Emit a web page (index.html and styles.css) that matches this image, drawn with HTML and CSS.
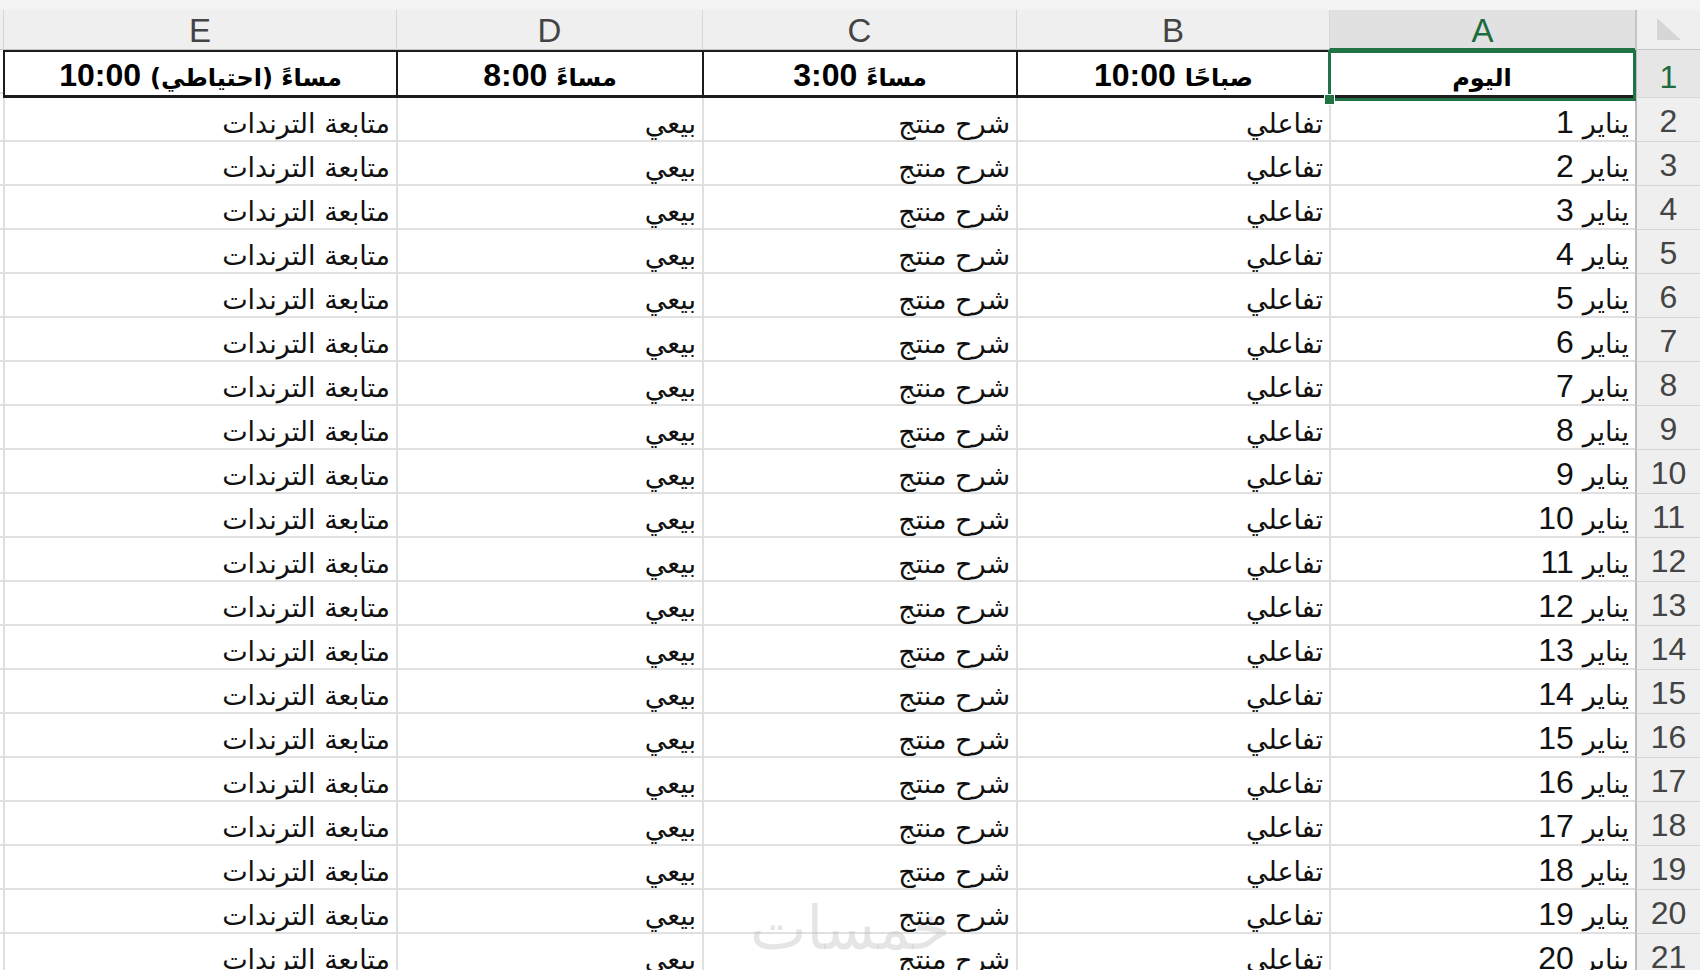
FILE: index.html
```html
<!DOCTYPE html>
<html lang="ar">
<head>
<meta charset="utf-8">
<title>جدول النشر</title>
<link rel="stylesheet" href="styles.css">
</head>
<body>
<div class="app">
  <div class="strip"></div>
  <div class="sheet" dir="rtl">
    <div class="corner"><svg width="26" height="22" viewBox="0 0 26 22"><polygon points="0,0 0,22 24,22" fill="#d6d6d6"/></svg></div>
    <div class="colh sel">A</div>
    <div class="colh">B</div>
    <div class="colh">C</div>
    <div class="colh">D</div>
    <div class="colh">E</div>
    <div class="colh edge"></div>

    <div class="rowh selr">1</div>
    <div class="hd active"><span class="arb">اليوم</span><div class="selbox"><i class="handle"></i></div></div>
    <div class="hd"><span class="arb">صباحًا</span> 10:00</div>
    <div class="hd"><span class="arb">مساءً</span> 3:00</div>
    <div class="hd"><span class="arb">مساءً</span> 8:00</div>
    <div class="hd"><span class="arb">مساءً (احتياطي)</span> 10:00</div>
    <div class="cell edge"></div>

    <div class="rowh">2</div><div class="cell"><span class="ar">يناير</span> 1</div><div class="cell"><span class="ar">تفاعلي</span></div><div class="cell"><span class="ar">شرح منتج</span></div><div class="cell"><span class="ar">بيعي</span></div><div class="cell"><span class="ar">متابعة الترندات</span></div><div class="cell edge"></div>
    <div class="rowh">3</div><div class="cell"><span class="ar">يناير</span> 2</div><div class="cell"><span class="ar">تفاعلي</span></div><div class="cell"><span class="ar">شرح منتج</span></div><div class="cell"><span class="ar">بيعي</span></div><div class="cell"><span class="ar">متابعة الترندات</span></div><div class="cell edge"></div>
    <div class="rowh">4</div><div class="cell"><span class="ar">يناير</span> 3</div><div class="cell"><span class="ar">تفاعلي</span></div><div class="cell"><span class="ar">شرح منتج</span></div><div class="cell"><span class="ar">بيعي</span></div><div class="cell"><span class="ar">متابعة الترندات</span></div><div class="cell edge"></div>
    <div class="rowh">5</div><div class="cell"><span class="ar">يناير</span> 4</div><div class="cell"><span class="ar">تفاعلي</span></div><div class="cell"><span class="ar">شرح منتج</span></div><div class="cell"><span class="ar">بيعي</span></div><div class="cell"><span class="ar">متابعة الترندات</span></div><div class="cell edge"></div>
    <div class="rowh">6</div><div class="cell"><span class="ar">يناير</span> 5</div><div class="cell"><span class="ar">تفاعلي</span></div><div class="cell"><span class="ar">شرح منتج</span></div><div class="cell"><span class="ar">بيعي</span></div><div class="cell"><span class="ar">متابعة الترندات</span></div><div class="cell edge"></div>
    <div class="rowh">7</div><div class="cell"><span class="ar">يناير</span> 6</div><div class="cell"><span class="ar">تفاعلي</span></div><div class="cell"><span class="ar">شرح منتج</span></div><div class="cell"><span class="ar">بيعي</span></div><div class="cell"><span class="ar">متابعة الترندات</span></div><div class="cell edge"></div>
    <div class="rowh">8</div><div class="cell"><span class="ar">يناير</span> 7</div><div class="cell"><span class="ar">تفاعلي</span></div><div class="cell"><span class="ar">شرح منتج</span></div><div class="cell"><span class="ar">بيعي</span></div><div class="cell"><span class="ar">متابعة الترندات</span></div><div class="cell edge"></div>
    <div class="rowh">9</div><div class="cell"><span class="ar">يناير</span> 8</div><div class="cell"><span class="ar">تفاعلي</span></div><div class="cell"><span class="ar">شرح منتج</span></div><div class="cell"><span class="ar">بيعي</span></div><div class="cell"><span class="ar">متابعة الترندات</span></div><div class="cell edge"></div>
    <div class="rowh">10</div><div class="cell"><span class="ar">يناير</span> 9</div><div class="cell"><span class="ar">تفاعلي</span></div><div class="cell"><span class="ar">شرح منتج</span></div><div class="cell"><span class="ar">بيعي</span></div><div class="cell"><span class="ar">متابعة الترندات</span></div><div class="cell edge"></div>
    <div class="rowh">11</div><div class="cell"><span class="ar">يناير</span> 10</div><div class="cell"><span class="ar">تفاعلي</span></div><div class="cell"><span class="ar">شرح منتج</span></div><div class="cell"><span class="ar">بيعي</span></div><div class="cell"><span class="ar">متابعة الترندات</span></div><div class="cell edge"></div>
    <div class="rowh">12</div><div class="cell"><span class="ar">يناير</span> 11</div><div class="cell"><span class="ar">تفاعلي</span></div><div class="cell"><span class="ar">شرح منتج</span></div><div class="cell"><span class="ar">بيعي</span></div><div class="cell"><span class="ar">متابعة الترندات</span></div><div class="cell edge"></div>
    <div class="rowh">13</div><div class="cell"><span class="ar">يناير</span> 12</div><div class="cell"><span class="ar">تفاعلي</span></div><div class="cell"><span class="ar">شرح منتج</span></div><div class="cell"><span class="ar">بيعي</span></div><div class="cell"><span class="ar">متابعة الترندات</span></div><div class="cell edge"></div>
    <div class="rowh">14</div><div class="cell"><span class="ar">يناير</span> 13</div><div class="cell"><span class="ar">تفاعلي</span></div><div class="cell"><span class="ar">شرح منتج</span></div><div class="cell"><span class="ar">بيعي</span></div><div class="cell"><span class="ar">متابعة الترندات</span></div><div class="cell edge"></div>
    <div class="rowh">15</div><div class="cell"><span class="ar">يناير</span> 14</div><div class="cell"><span class="ar">تفاعلي</span></div><div class="cell"><span class="ar">شرح منتج</span></div><div class="cell"><span class="ar">بيعي</span></div><div class="cell"><span class="ar">متابعة الترندات</span></div><div class="cell edge"></div>
    <div class="rowh">16</div><div class="cell"><span class="ar">يناير</span> 15</div><div class="cell"><span class="ar">تفاعلي</span></div><div class="cell"><span class="ar">شرح منتج</span></div><div class="cell"><span class="ar">بيعي</span></div><div class="cell"><span class="ar">متابعة الترندات</span></div><div class="cell edge"></div>
    <div class="rowh">17</div><div class="cell"><span class="ar">يناير</span> 16</div><div class="cell"><span class="ar">تفاعلي</span></div><div class="cell"><span class="ar">شرح منتج</span></div><div class="cell"><span class="ar">بيعي</span></div><div class="cell"><span class="ar">متابعة الترندات</span></div><div class="cell edge"></div>
    <div class="rowh">18</div><div class="cell"><span class="ar">يناير</span> 17</div><div class="cell"><span class="ar">تفاعلي</span></div><div class="cell"><span class="ar">شرح منتج</span></div><div class="cell"><span class="ar">بيعي</span></div><div class="cell"><span class="ar">متابعة الترندات</span></div><div class="cell edge"></div>
    <div class="rowh">19</div><div class="cell"><span class="ar">يناير</span> 18</div><div class="cell"><span class="ar">تفاعلي</span></div><div class="cell"><span class="ar">شرح منتج</span></div><div class="cell"><span class="ar">بيعي</span></div><div class="cell"><span class="ar">متابعة الترندات</span></div><div class="cell edge"></div>
    <div class="rowh">20</div><div class="cell"><span class="ar">يناير</span> 19</div><div class="cell"><span class="ar">تفاعلي</span></div><div class="cell"><span class="ar">شرح منتج</span></div><div class="cell"><span class="ar">بيعي</span></div><div class="cell"><span class="ar">متابعة الترندات</span></div><div class="cell edge"></div>
    <div class="rowh">21</div><div class="cell"><span class="ar">يناير</span> 20</div><div class="cell"><span class="ar">تفاعلي</span></div><div class="cell"><span class="ar">شرح منتج</span></div><div class="cell"><span class="ar">بيعي</span></div><div class="cell"><span class="ar">متابعة الترندات</span></div><div class="cell edge"></div>
  </div>
  <div class="watermark">خمسات</div>
</div>
</body>
</html>
```

FILE: styles.css
```css
html, body {
  margin: 0;
  padding: 0;
  background: #ffffff;
  overflow: hidden;
}
.app {
  position: relative;
  width: 1700px;
  height: 970px;
  overflow: hidden;
  font-family: "Liberation Sans", "DejaVu Sans", sans-serif;
}
.strip {
  height: 10px;
  background: #f3f3f3;
}
.sheet {
  display: grid;
  direction: rtl;
  grid-template-columns: 65px 306px 313px 314px 306px 393px 3px;
  grid-template-rows: 40px 48px repeat(20, 44px);
}
.corner {
  background: #efefef;
  border-bottom: 1px solid #c6c6c6;
  border-left: 2px solid #c6c6c6;
  box-sizing: border-box;
  display: flex;
  align-items: flex-end;
  justify-content: flex-end;
  padding: 0 0 9px 20px;
}
.corner svg { display: block; }
.colh {
  background: #efefef;
  box-sizing: border-box;
  border-left: 1px solid #d6d6d6;
  border-bottom: 1px solid #c6c6c6;
  color: #444444;
  font-size: 33px;
  line-height: 38px;
  text-align: center;
  padding-top: 2px;
}
.colh.sel {
  background: #e1e1e1;
  color: #1e6b40;
  border-bottom: 2px solid #217346;
}
.colh.edge { border-left: 0; }
.rowh {
  background: #efefef;
  box-sizing: border-box;
  border-bottom: 1px solid #d6d6d6;
  border-left: 2px solid #bcbcbc;
  color: #444444;
  font-size: 32px;
  line-height: 36px;
  display: flex;
  align-items: flex-end;
  justify-content: center;
  padding-bottom: 2px;
}
.rowh.selr {
  background: #e6e6e6;
  color: #1e6b40;
}
.cell {
  box-sizing: border-box;
  border-bottom: 2px solid #e0e0e0;
  border-left: 2px solid #e0e0e0;
  color: #111111;
  font-size: 32px;
  line-height: 36px;
  height: 44px;
  padding: 6px 6px 0 6px;
  text-align: right;
  white-space: nowrap;
  overflow: hidden;
}
.cell.edge { border-left: 0; padding: 0; }
.ar {
  font-family: "DejaVu Sans", sans-serif;
  font-size: 27px;
  line-height: 36px;
}
.hd {
  box-sizing: border-box;
  border-top: 2px solid #1c1c1c;
  border-bottom: 3px solid #1c1c1c;
  border-left: 2px solid #1c1c1c;
  color: #000000;
  font-size: 32px;
  font-weight: bold;
  line-height: 36px;
  height: 48px;
  padding-top: 5px;
  text-align: center;
  white-space: nowrap;
}
.arb {
  font-family: "DejaVu Sans", sans-serif;
  font-size: 24px;
  font-weight: bold;
  line-height: 36px;
}
.hd.active { position: relative; border-right: 2px solid #1c1c1c; }
.selbox {
  position: absolute;
  top: -2px;
  bottom: -6px;
  left: -3px;
  right: -3px;
  border: 3px solid #217346;
  box-sizing: border-box;
  pointer-events: none;
}
.handle {
  position: absolute;
  left: -7px;
  bottom: -7px;
  width: 9px;
  height: 9px;
  background: #217346;
  border: 1px solid #ffffff;
}
.watermark {
  position: absolute;
  left: 745px;
  top: 893px;
  width: 210px;
  text-align: center;
  font-family: "DejaVu Sans", sans-serif;
  font-size: 60px;
  line-height: 70px;
  color: rgba(190, 190, 190, 0.4);
  pointer-events: none;
}
```
